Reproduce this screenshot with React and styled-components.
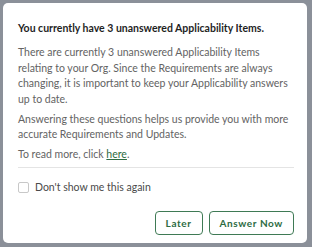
import React from "react";
import styled, { createGlobalStyle } from "styled-components";

const Global = createGlobalStyle`
  html, body { margin: 0; padding: 0; }
  body { background: #8b9099; font-family: Lato, "Noto Sans", sans-serif; }
`;

const Overlay = styled.div`
  width: 312px;
  height: 247px;
  box-sizing: border-box;
  padding: 3px 5px 4px 3px;
  background: #8b9099;
`;

const Modal = styled.div`
  box-sizing: border-box;
  height: 240px;
  background: #fff;
  border-radius: 5px;
  padding: 18px 13px 0 15px;
  display: flex;
  flex-direction: column;
`;

const Title = styled.h2`
  margin: 0 0 10px;
  font-size: 10.5px;
  font-weight: 700;
  line-height: 14px;
  color: #1f1f1f;
`;

const Para = styled.p`
  margin: 0 0 4.5px;
  font-size: 10.5px;
  line-height: 15.5px;
  color: #636363;
`;

const Link = styled.a`
  color: #2d6b43;
  text-decoration: underline;
`;

const Divider = styled.hr`
  border: 0;
  border-top: 1px solid #e4e4e4;
  margin: 0;
`;

const CheckRow = styled.label`
  display: flex;
  align-items: center;
  gap: 6px;
  margin-top: 12px;
  font-size: 10.5px;
  line-height: 14px;
  color: #4a4a4a;
`;

const Box = styled.span`
  width: 9px;
  height: 9px;
  border: 1px solid #c8c8c8;
  border-radius: 2px;
  background: #fff;
`;

const Actions = styled.div`
  display: flex;
  justify-content: flex-end;
  gap: 6px;
  margin-top: 17px;
`;

const Button = styled.button`
  height: 24px;
  padding: 0 ${(p) => p.$pad}px;
  background: #fff;
  border: 1px solid #3f7a55;
  border-radius: 4px;
  color: #2d6b43;
  font-family: Lato, sans-serif;
  font-weight: 700;
  font-size: 10px;
  letter-spacing: 0.6px;
  cursor: pointer;
`;

export default function App() {
  return (
    <>
      <Global />
      <Overlay>
        <Modal>
          <Title>You currently have 3 unanswered Applicability Items.</Title>
          <Para>
            There are currently 3 unanswered Applicability Items relating to your Org. Since the
            Requirements are always changing, it is important to keep your Applicability answers
            up to date.
          </Para>
          <Para>
            Answering these questions helps us provide you with more accurate Requirements and
            Updates.
          </Para>
          <Para>
            To read more, click <Link href="#">here</Link>.
          </Para>
          <Divider />
          <CheckRow>
            <Box />
            Don't show me this again
          </CheckRow>
          <Actions>
            <Button $pad={10}>Later</Button>
            <Button $pad={10}>Answer Now</Button>
          </Actions>
        </Modal>
      </Overlay>
    </>
  );
}
